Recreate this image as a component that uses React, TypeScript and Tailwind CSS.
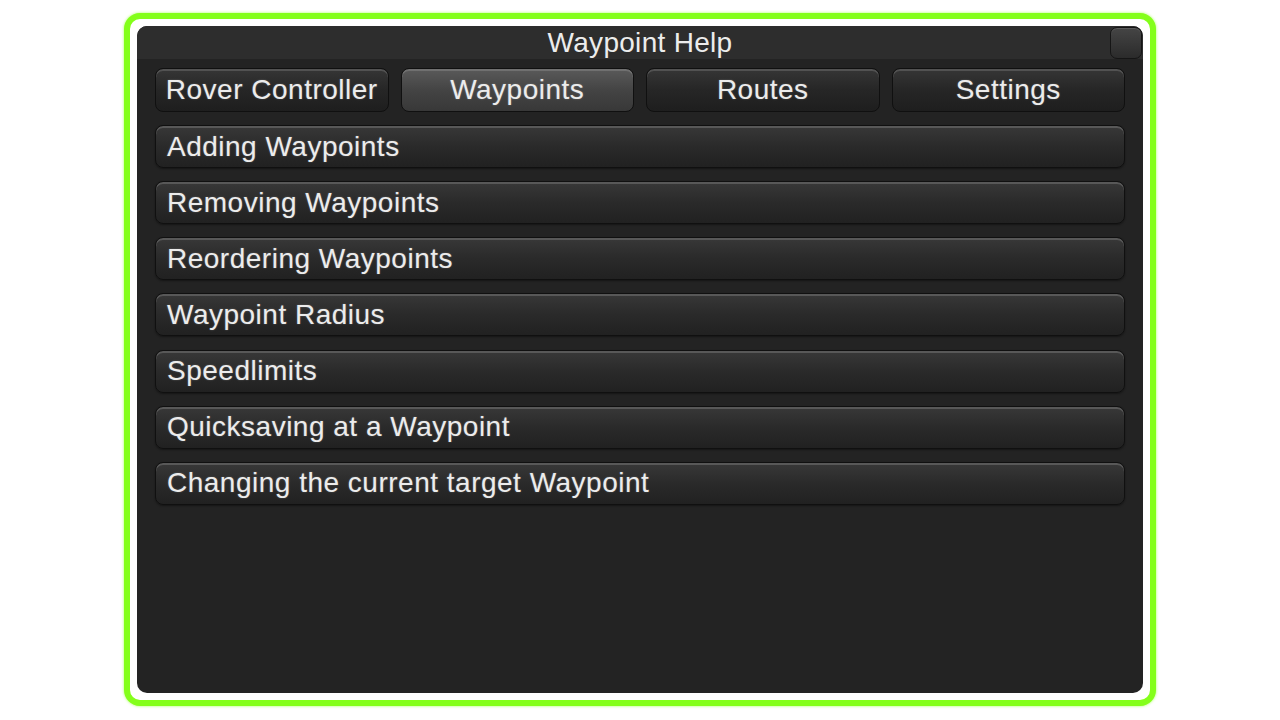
import React from 'react';

const tabs = ['Rover Controller', 'Waypoints', 'Routes', 'Settings'];
const topics = [
  'Adding Waypoints',
  'Removing Waypoints',
  'Reordering Waypoints',
  'Waypoint Radius',
  'Speedlimits',
  'Quicksaving at a Waypoint',
  'Changing the current target Waypoint',
];

const font = { fontFamily: '"Liberation Sans", Arial, sans-serif' };

const App: React.FC = () => {
  const active = 'Waypoints';

  return (
    <div className="w-[1280px] h-[720px] bg-white pt-[13px] pl-[124px]" style={font}>
      <div className="w-[1032px] h-[693px] rounded-[16px] border-[6px] border-[#84ff1a] bg-white p-[7px] shadow-[0_0_3px_#a8ff5a]">
        <div className="relative h-full rounded-[10px] bg-[#232323] overflow-hidden">
          {/* title bar */}
          <div className="h-[33px] bg-[#2d2d2d] flex items-center justify-center pt-[1px] text-[28px] text-[#ececec] tracking-[0.3px]">
            Waypoint Help
          </div>
          <button className="absolute right-[1px] top-[1px] w-[32px] h-[32px] rounded-[7px] border border-[#151515] bg-gradient-to-b from-[#454545] to-[#2b2b2b] shadow-[inset_0_1px_0_#5a5a5a]" />

          <div className="px-[18px] pt-[9px]">
            {/* tabs */}
            <div className="grid grid-cols-4 gap-[12px]">
              {tabs.map(t => (
                <div
                  key={t}
                  className={`h-[44px] rounded-[8px] border border-[#101010] flex items-center justify-center text-[28px] tracking-[0.5px] text-[#ececec] [text-shadow:0_0_2px_rgba(255,255,255,0.25)] ${
                    t === active
                      ? 'bg-gradient-to-b from-[#5a5a5a] via-[#444] to-[#383838] shadow-[inset_0_2px_0_#707070]'
                      : 'bg-gradient-to-b from-[#363636] via-[#262626] to-[#1e1e1e] shadow-[inset_0_2px_0_#525252]'
                  }`}
                >
                  {t}
                </div>
              ))}
            </div>

            {/* topics */}
            <div className="mt-[13px] flex flex-col gap-[13.17px]">
              {topics.map(t => (
                <div
                  key={t}
                  className="h-[43px] rounded-[8px] border border-[#101010] bg-gradient-to-b from-[#383838] via-[#2a2a2a] to-[#212121] shadow-[inset_0_2px_0_#585858,0_1px_2px_rgba(0,0,0,0.4)] flex items-center pl-[11px] text-[28px] tracking-[0.5px] text-[#ececec] [text-shadow:0_0_2px_rgba(255,255,255,0.25)]"
                >
                  {t}
                </div>
              ))}
            </div>
          </div>
        </div>
      </div>
    </div>
  );
};

export default App;
